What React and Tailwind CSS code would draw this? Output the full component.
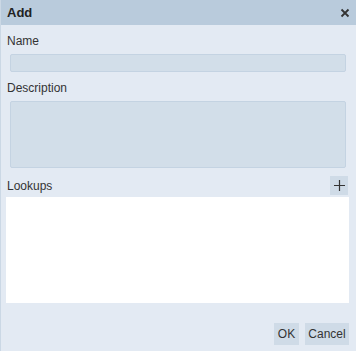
import React from 'react';

const AddDialog = () => {
  return (
    <div
      className="w-[356px] h-[351px] bg-[#e3eaf3] border-l border-[#cbd8e5] flex flex-col text-[#333] text-[12px]"
      style={{ fontFamily: '"Liberation Sans", Arial, sans-serif' }}
    >
      {/* Title bar */}
      <div className="h-[25px] bg-[#b9cbdc] flex items-center justify-between pl-[6px] pr-[6px]">
        <span className="font-bold text-[13px] text-[#222]">Add</span>
        <svg className="w-[10px] h-[10px]" viewBox="0 0 10 10" fill="none" stroke="#333" strokeWidth="1.8">
          <path d="M1.5 1.5 L8.5 8.5 M8.5 1.5 L1.5 8.5" />
        </svg>
      </div>

      <div className="flex flex-col pl-[5px] pr-[6px]">
        <label className="mt-[8px] leading-[16px] pl-[1px]">Name</label>
        <div className="mt-[5px] ml-[4px] w-[336px] h-[18px] bg-[#d2dee9] border border-[#c4d3e2] rounded-[2px]" />

        <label className="mt-[8px] leading-[16px] pl-[1px]">Description</label>
        <div className="mt-[5px] ml-[4px] w-[336px] h-[67px] bg-[#d2dee9] border border-[#c4d3e2] rounded-[2px]" />

        <div className="mt-[8px] h-[19px] flex items-center justify-between">
          <span className="pl-[1px] leading-[16px]">Lookups</span>
          <button className="w-[18px] h-[19px] bg-[#cfdbe7] flex items-center justify-center mr-[2px]">
            <svg className="w-[11px] h-[11px]" viewBox="0 0 11 11" fill="none" stroke="#333" strokeWidth="1.2">
              <path d="M5.5 0 V11 M0 5.5 H11" />
            </svg>
          </button>
        </div>
        <div className="mt-[2px] w-[343px] h-[106px] bg-white" />

        <div className="mt-[20px] flex justify-end gap-[6px] pr-[1px]">
          <button className="w-[25px] h-[22px] bg-[#cfdbe7] text-[12px] text-[#333]">OK</button>
          <button className="w-[44px] h-[22px] bg-[#cfdbe7] text-[12px] text-[#333]">Cancel</button>
        </div>
      </div>
    </div>
  );
};

export default function App() {
  return <AddDialog />;
}
